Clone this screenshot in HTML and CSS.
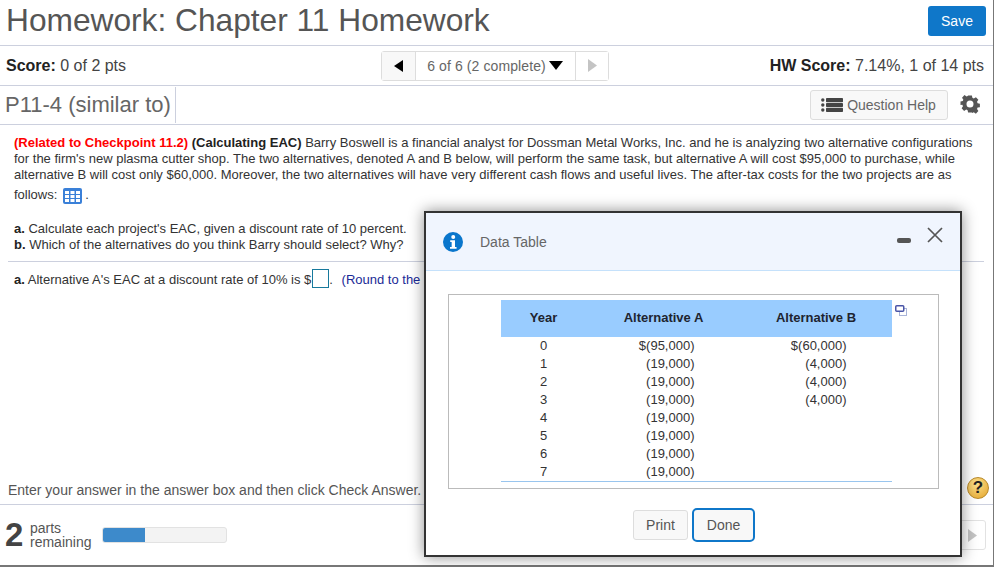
FILE: index.html
```html
<!DOCTYPE html>
<html lang="en">
<head>
<meta charset="utf-8">
<title>Homework: Chapter 11 Homework</title>
<link rel="stylesheet" href="styles.css">
</head>
<body>
<div class="page">
  <header class="title-row">
    <h1>Homework: Chapter 11 Homework</h1>
    <button class="save">Save</button>
  </header>
  <div class="score-row">
    <div class="score"><b>Score:</b> 0 of 2 pts</div>
    <div class="pager">
      <span class="pager-btn"><svg width="9" height="12" viewBox="0 0 9 12"><path d="M9 0v12L0 6z" fill="#000"/></svg></span>
      <span class="pager-mid">6 of 6 (2 complete)<svg class="down" width="14" height="9" viewBox="0 0 14 9"><path d="M0 0h14L7 9z" fill="#000"/></svg></span>
      <span class="pager-btn last"><svg width="9" height="13" viewBox="0 0 9 13"><path d="M0 0v13l9-6.500z" fill="#c4c4c4"/></svg></span>
    </div>
    <div class="hw"><b>HW Score:</b> 7.14%, 1 of 14 pts</div>
  </div>
  <div class="q-row">
    <div class="q-name">P11-4 (similar to)</div>
    <div class="q-tools">
      <button class="help">
        <svg width="22" height="14" viewBox="0 0 22 14"><g fill="#444"><circle cx="1.800" cy="2" r="1.700"/><circle cx="1.800" cy="7" r="1.700"/><circle cx="1.800" cy="12" r="1.700"/><rect x="5" y="0" width="17" height="4.200" rx=".8"/><rect x="5" y="4.900" width="17" height="4.200" rx=".8"/><rect x="5" y="9.800" width="17" height="4.200" rx=".8"/></g></svg>
        Question Help
      </button>
      <svg class="gear" width="20" height="20" viewBox="0 0 20 20"><path fill="#555" fill-rule="evenodd" d="M8 1h4l.5 2.500 1.500.7 2.200-1.400 2.600 2.800-1.400 2.100.6 1.500 2.400.5v3.600l-2.400.5-.6 1.500 1.400 2.100-2.600 2.800-2.200-1.400-1.500.6L12 19H8l-.5-2.500-1.500-.6-2.200 1.400-2.600-2.800 1.400-2.100-.6-1.500L0 11V7.400l2.400-.5.600-1.500L1.600 3.300l2.600-2.800L6.400 2l1.100-.5zM10 6.300a3.400 3.400 0 1 0 0 7.400 3.400 3.400 0 0 0 0-7.400z" transform="translate(.5 .5) scale(.95)"/></svg>
    </div>
  </div>
  <main class="content">
    <p class="intro"><span class="related">(Related to Checkpoint 11.2)</span> <b>(Calculating EAC)</b> Barry Boswell is a financial analyst for Dossman Metal Works, Inc. and he is analyzing two alternative configurations for the firm's new plasma cutter shop. The two alternatives, denoted A and B below, will perform the same task, but alternative A will cost $95,000 to purchase, while alternative B will cost only $60,000. Moreover, the two alternatives will have very different cash flows and useful lives. The after-tax costs for the two projects are as</p>
    <p class="follows">follows:
      <svg class="grid-icon" width="19" height="16" viewBox="0 0 19 16"><rect width="19" height="16" rx="2" fill="#3a80d8"/><g fill="#fff"><rect x="2" y="3" width="4" height="3"/><rect x="7.500" y="3" width="4" height="3"/><rect x="13" y="3" width="4" height="3"/><rect x="2" y="7" width="4" height="3"/><rect x="7.500" y="7" width="4" height="3"/><rect x="13" y="7" width="4" height="3"/><rect x="2" y="11" width="4" height="3"/><rect x="7.500" y="11" width="4" height="3"/><rect x="13" y="11" width="4" height="3"/></g></svg> .</p>
    <p class="parts"><b>a.</b> Calculate each project's EAC, given a discount rate of 10 percent.<br><b>b.</b> Which of the alternatives do you think Barry should select? Why?</p>
    <hr class="rule">
    <p class="answer"><b>a.</b> Alternative A's EAC at a discount rate of 10% is $<span class="box"></span>. <span class="round">(Round to the nearest cent.)</span></p>
  </main>
  <div class="hint-row">
    <span>Enter your answer in the answer box and then click Check Answer.</span>
    <span class="q-mark">?</span>
  </div>
  <footer class="foot">
    <span class="num">2</span>
    <span class="remain">parts<br>remaining</span>
    <span class="bar"><span class="bar-fill"></span></span>
    <span class="next"><svg width="9" height="13" viewBox="0 0 9 13"><path d="M0 0v13l9-6.500z" fill="#c4c4c4"/></svg></span>
  </footer>
</div>

<section class="modal">
  <div class="m-head">
    <svg width="20" height="20" viewBox="0 0 18 18"><circle cx="9" cy="9" r="9" fill="#0a76cc"/><circle cx="9.200" cy="4.600" r="1.800" fill="#fff"/><path d="M6.500 7.500h4.300v6h1.400v1.500H6.300v-1.500h1.500V9H6.500z" fill="#fff"/></svg>
    <span class="m-title">Data Table</span>
    <span class="m-min"></span>
    <svg class="m-close" width="16" height="16" viewBox="0 0 16 16"><path d="M1 1l14 14M15 1L1 15" stroke="#555" stroke-width="1.700" fill="none"/></svg>
  </div>
  <div class="m-body">
    <div class="t-box">
      <table>
        <thead><tr><th class="c1">Year</th><th class="c2">Alternative A</th><th class="c3">Alternative B</th></tr></thead>
        <tbody>
          <tr><td class="c1">0</td><td class="c2">$(95,000)</td><td class="c3">$(60,000)</td></tr>
          <tr><td class="c1">1</td><td class="c2">(19,000)</td><td class="c3">(4,000)</td></tr>
          <tr><td class="c1">2</td><td class="c2">(19,000)</td><td class="c3">(4,000)</td></tr>
          <tr><td class="c1">3</td><td class="c2">(19,000)</td><td class="c3">(4,000)</td></tr>
          <tr><td class="c1">4</td><td class="c2">(19,000)</td><td class="c3"></td></tr>
          <tr><td class="c1">5</td><td class="c2">(19,000)</td><td class="c3"></td></tr>
          <tr><td class="c1">6</td><td class="c2">(19,000)</td><td class="c3"></td></tr>
          <tr><td class="c1">7</td><td class="c2">(19,000)</td><td class="c3"></td></tr>
        </tbody>
      </table>
      <svg class="copy" width="12" height="11" viewBox="0 0 12 11"><rect x="4.500" y="3.500" width="7" height="7" fill="#fff" stroke="#a9b4d8"/><rect x=".75" y=".75" width="8" height="5.500" rx="1" fill="#fff" stroke="#4a55a8" stroke-width="1.500"/></svg>
    </div>
    <div class="m-actions">
      <button class="btn">Print</button>
      <button class="btn done">Done</button>
    </div>
  </div>
</section>
</body>
</html>
```
FILE: styles.css
```css
* { box-sizing: border-box; }
html, body { margin: 0; height: 100%; overflow: hidden; background: #fff; }
body { font-family: "Liberation Sans", Arial, sans-serif; color: #333; position: relative; }

.page { width: 994px; height: 567px; border-right: 1px solid #777; border-bottom: 2px solid #777; display: flex; flex-direction: column; }

.title-row { height: 46px; flex: none; display: flex; align-items: center; justify-content: space-between; padding: 0 7px 0 6px; border-bottom: 1px solid #ccd0de; }
h1 { margin: 0; font-size: 31.700px; font-weight: 400; color: #555; line-height: 40px; position: relative; top: -3px; white-space: nowrap; }
.save { width: 58px; height: 30px; background: #0f77c9; color: #fff; border: 0; border-radius: 3px; font: 14px "Liberation Sans", Arial, sans-serif; position: relative; top: -2px; padding: 0; }

.score-row { height: 40px; flex: none; display: grid; grid-template-columns: 375px 228px 1fr; align-items: center; padding: 0 9px 0 6px; border-bottom: 1px solid #ccd0de; font-size: 16px; }
.score-row b { color: #222; }
.score { color: #444; }
.hw { color: #444; text-align: right; white-space: nowrap; }
.pager { height: 30px; display: flex; align-items: center; border: 1px solid #ddd; border-radius: 3px; background: #fff; font-size: 14px; color: #666; }
.pager-btn { width: 34px; height: 100%; display: flex; align-items: center; justify-content: center; background: #f8f8f8; border-right: 1px solid #ddd; }
.pager-btn.last { width: 33px; background: #fff; border-right: 0; border-left: 1px solid #ddd; }
.pager-mid { flex: 1; display: flex; align-items: center; justify-content: center; gap: 3px; white-space: nowrap; padding-right: 1px; letter-spacing: .1px; }

.q-row { height: 39px; flex: none; display: flex; align-items: center; justify-content: space-between; padding: 0 13px 0 5px; border-bottom: 1px solid #ccd0de; }
.q-name { height: 36px; width: 171px; border-right: 1px solid #ccd0de; font-size: 22px; color: #666; line-height: 36px; white-space: nowrap; }
.q-tools { display: flex; align-items: center; gap: 12px; }
.help { width: 138px; height: 30px; display: flex; align-items: center; justify-content: center; gap: 4px; background: #f8f8f8; border: 1px solid #ddd; border-radius: 3px; font: 14px "Liberation Sans", Arial, sans-serif; color: #666; padding: 0 1px 0 0; }
.gear { display: block; margin-top: -2px; }

.content { flex: 1; min-height: 0; padding: 10px 10px 0 14px; font-size: 13px; line-height: 16px; color: #333; }
.content p { margin: 0; }
.content b { color: #222; }
.related { color: #f00; font-weight: 700; }
.follows { margin-top: 1px !important; height: 21px; display: flex; align-items: center; gap: 5px; }
.grid-icon { margin: 2px -2px 0 1px; }
.parts { margin-top: 16px !important; }
.rule { margin: 8px -1px 0 -6px; border: 0; border-top: 1px solid #ccd0de; }
.answer { margin-top: 7px !important; white-space: nowrap; }
.box { display: inline-block; width: 17px; height: 19px; border: 1px solid #17799c; background: #fff; vertical-align: -4px; margin: 0 0 0 1px; }
.round { color: #1a2a96; margin-left: 5px; }

.hint-row { height: 34px; flex: none; display: flex; align-items: center; justify-content: space-between; padding: 4px 3px 0 8px; border-bottom: 1px solid #ccd0de; font-size: 14px; color: #555; white-space: nowrap; }
.q-mark { width: 22px; height: 22px; border-radius: 50%; background: radial-gradient(circle at 40% 30%, #fde08c, #e3a42a); border: 1px solid #b98a2a; color: #222; font-weight: 700; font-size: 17px; line-height: 20px; text-align: center; position: relative; right: 1px; top: -2px; }

.foot { height: 60px; flex: none; display: flex; align-items: center; padding: 0 5px 0 5px; position: relative; color: #555; }
.num { font-size: 33px; font-weight: 700; color: #444; width: 25px; line-height: 30px; }
.remain { font-size: 14px; line-height: 14px; width: 72px; }
.bar { width: 125px; height: 16px; background: #f3f3f3; border: 1px solid #e2e2e2; border-radius: 3px; overflow: hidden; display: block; }
.bar-fill { display: block; width: 34%; height: 100%; background: #3d8acb; }
.next { position: absolute; right: 7px; top: 15px; width: 28px; height: 30px; border: 1px solid #e2e2e2; border-radius: 3px; display: flex; align-items: center; justify-content: center; }

.modal { position: absolute; left: 424px; top: 211px; width: 538px; height: 346px; border: 2.500px solid #333; background: #fff; box-shadow: 0 0 14px rgba(0,0,0,.45); }
.m-head { height: 58px; background: #f0f5fe; border-bottom: 1px solid #c5e1fb; display: flex; align-items: center; padding: 0 17px 0 17px; color: #666; font-size: 14px; position: relative; }
.m-title { margin-left: 17px; }
.m-min { margin-left: auto; width: 14px; height: 5px; background: #555; border-radius: 2px; margin-right: 16px; position: relative; top: -1px; }
.m-close { position: relative; top: -7px; }
.m-body { padding: 23px 21px 0 22px; }
.t-box { height: 195px; border: 1px solid #bbb; padding: 5px 45px 0 51.500px; position: relative; }
table { width: 391px; border-collapse: collapse; table-layout: fixed; font-size: 13px; color: #333; border-bottom: 1px solid #99c5ee; }
thead th { height: 37px; background: #99ccff; font-weight: 700; color: #1e2430; padding: 0 0 2px; }
tbody tr { height: 18px; }
tbody td { padding: 0; line-height: 18px; }
.c1 { width: 86px; text-align: center; }
.c2 { width: 154px; }
.c3 { width: 151px; }
thead .c2, thead .c3 { text-align: center; }
tbody .c2 { text-align: right; padding-right: 46px; }
tbody .c3 { text-align: right; padding-right: 45px; }
.copy { position: absolute; left: 446px; top: 10px; }
.m-actions { display: flex; justify-content: center; gap: 4px; margin-top: 21px; padding-left: 1px; }
.btn { width: 55px; height: 30px; background: #f8f8f8; border: 1px solid #ddd; border-radius: 3px; font: 14px "Liberation Sans", Arial, sans-serif; color: #555; padding: 0; }
.btn.done { width: 63px; height: 34px; margin-top: -2px; border: 2.500px solid #0f77c9; border-radius: 5px; }
```
